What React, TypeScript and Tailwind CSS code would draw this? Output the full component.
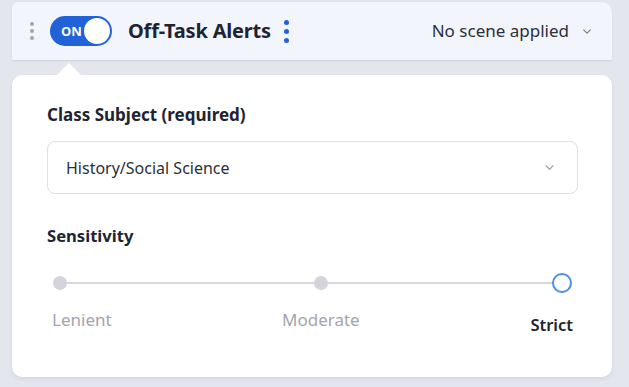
import React from "react";

function Chevron({ className }: { className: string }) {
  return (
    <svg viewBox="0 0 12 8" className={className} fill="none" stroke="currentColor" strokeWidth="1.4" strokeLinecap="round" strokeLinejoin="round">
      <path d="M2 2 L6 6 L10 2" />
    </svg>
  );
}

export default function App() {
  return (
    <div
      className="w-[629px] h-[387px] bg-[#e4e6ee] pl-[12px] pr-[17px] pt-[2px] overflow-hidden"
      style={{ fontFamily: '"Noto Sans", "Open Sans", sans-serif' }}
    >
      {/* Header bar */}
      <div className="h-[58px] bg-[#f3f5fc] rounded-tr-[10px] rounded-tl-[6px] flex items-center shadow-[0_1px_2px_rgba(30,40,70,0.10)]">
        <div className="ml-[18px] flex flex-col gap-[3px]">
          <span className="block w-[4px] h-[4px] rounded-full bg-[#a3a6ad]" />
          <span className="block w-[4px] h-[4px] rounded-full bg-[#a3a6ad]" />
          <span className="block w-[4px] h-[4px] rounded-full bg-[#a3a6ad]" />
        </div>
        <div className="ml-[16px] w-[62px] h-[30px] rounded-full bg-[#2262d8] flex items-center justify-between pl-[11px] pr-[2px]">
          <span className="text-white text-[13px] font-bold leading-none">ON</span>
          <span className="block w-[26px] h-[26px] rounded-full bg-white" />
        </div>
        <span className="ml-[16px] text-[20px] font-bold text-[#1e2431] tracking-[-0.2px]">Off-Task Alerts</span>
        <div className="ml-[13px] flex flex-col gap-[4px]">
          <span className="block w-[5px] h-[5px] rounded-full bg-[#2262d8]" />
          <span className="block w-[5px] h-[5px] rounded-full bg-[#2262d8]" />
          <span className="block w-[5px] h-[5px] rounded-full bg-[#2262d8]" />
        </div>
        <div className="flex-1" />
        <span className="text-[17px] text-[#2a2f3a]">No scene applied</span>
        <Chevron className="ml-[13px] mr-[20px] w-[10px] h-[7px] text-[#7a7f88]" />
      </div>

      {/* Pointer + card */}
      <div className="relative mt-[15px]">
        <div className="absolute left-[45px] top-[-12px] w-0 h-0 border-l-[12px] border-r-[12px] border-b-[12px] border-l-transparent border-r-transparent border-b-white" />
        <div className="h-[302px] bg-white rounded-[10px] shadow-[0_2px_4px_rgba(30,40,70,0.08)] pl-[35px] pr-[34px] pt-[28px]">
          <div className="text-[17px] leading-[24px] font-bold text-[#1e2431]">Class Subject (required)</div>
          <div className="mt-[14px] h-[53px] border border-[#dcdfe6] rounded-[8px] flex items-center pl-[18px] pr-[22px]">
            <span className="flex-1 text-[16px] text-[#2a2f3a]">History/Social Science</span>
            <Chevron className="w-[11px] h-[7px] text-[#a2a6ad]" />
          </div>
          <div className="mt-[30px] text-[16.6px] leading-[24px] font-bold text-[#1e2431]">Sensitivity</div>

          {/* Slider */}
          <div className="relative mt-[25px] h-[20px] mx-[6px]">
            <div className="absolute left-[7px] right-[10px] top-[9px] h-[2px] bg-[#d6d6e0]" />
            <span className="absolute left-0 top-[3px] w-[14px] h-[14px] rounded-full bg-[#d4d4de]" />
            <span className="absolute left-[261px] top-[3px] w-[14px] h-[14px] rounded-full bg-[#d4d4de]" />
            <span className="absolute right-0 top-0 w-[20px] h-[20px] rounded-full border-2 border-[#4a8ef0] bg-white" />
          </div>
          <div className="relative h-[40px] mt-[14px]">
            <span className="absolute left-[5px] top-[0px] text-[17px] text-[#a3a4ad]">Lenient</span>
            <span className="absolute left-[235px] top-[0px] text-[17px] text-[#a3a4ad]">Moderate</span>
            <span className="absolute right-[5px] top-[6px] text-[16.5px] font-semibold text-[#1e2431]">Strict</span>
          </div>
        </div>
      </div>
    </div>
  );
}
